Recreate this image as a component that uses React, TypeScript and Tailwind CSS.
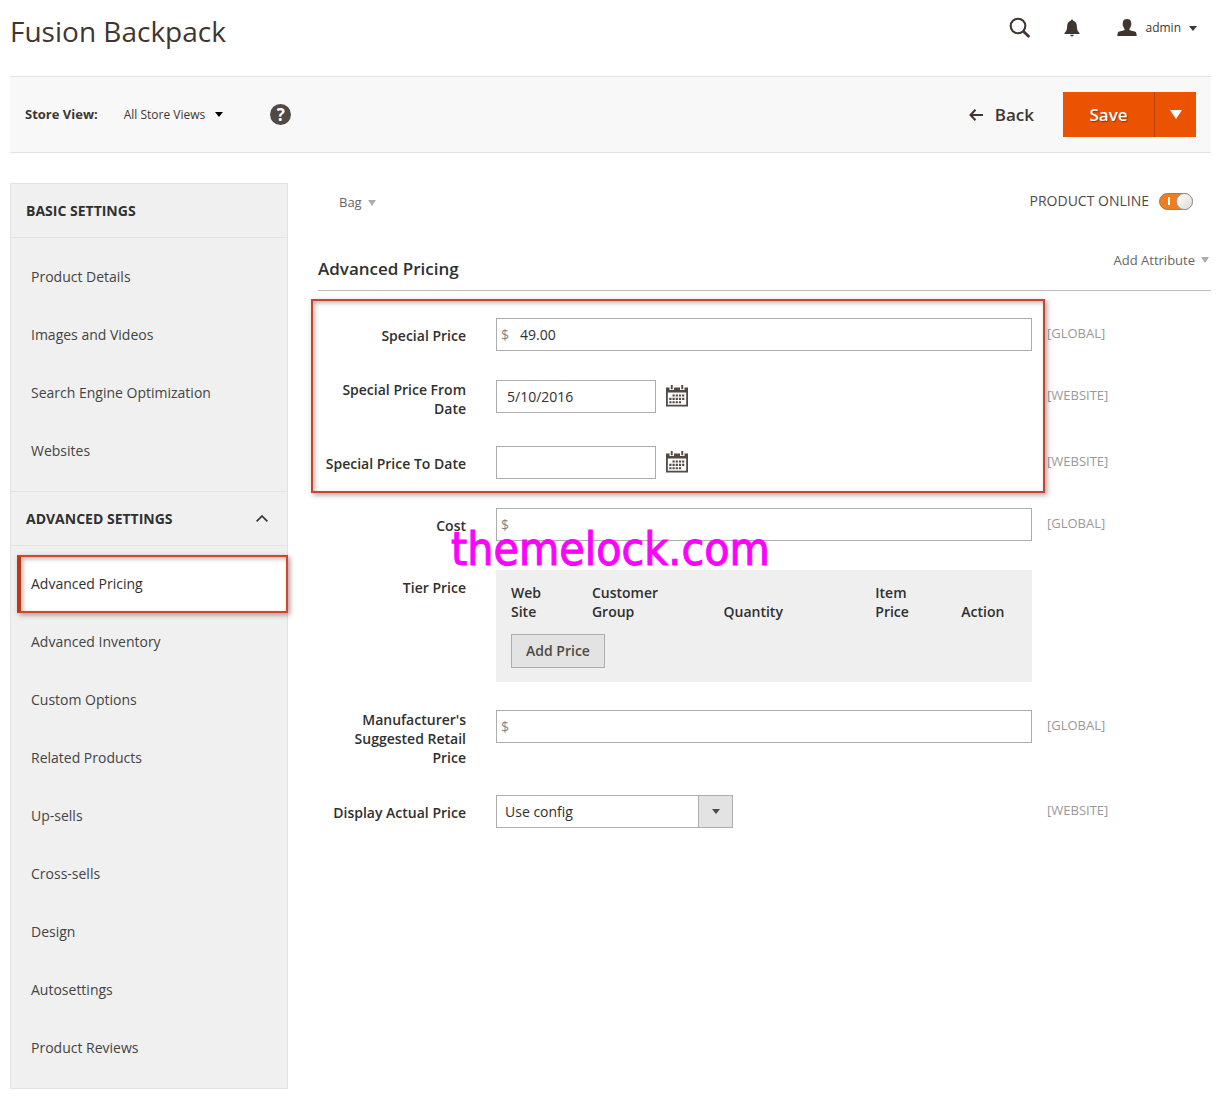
import { useState, type ReactNode } from "react";

const basicItems = ["Product Details", "Images and Videos", "Search Engine Optimization", "Websites"];
const advancedItems = [
  "Advanced Pricing",
  "Advanced Inventory",
  "Custom Options",
  "Related Products",
  "Up-sells",
  "Cross-sells",
  "Design",
  "Autosettings",
  "Product Reviews",
];

function Caret({ className }: { className: string }) {
  return (
    <svg viewBox="0 0 10 6" preserveAspectRatio="none" className={className} fill="currentColor" aria-hidden="true">
      <path d="M0 0h10L5 6z" />
    </svg>
  );
}

function SearchIcon() {
  return (
    <svg viewBox="0 0 22 22" className="h-[22px] w-[22px]" fill="none" stroke="currentColor" aria-hidden="true">
      <circle cx="9" cy="9" r="7.3" strokeWidth="2.1" />
      <path d="M14.3 14.3l6 5.6" strokeWidth="2.8" />
    </svg>
  );
}

function BellIcon() {
  return (
    <svg viewBox="0 0 16 18" className="h-[18px] w-4" fill="currentColor" aria-hidden="true">
      <path d="M8 .5c.8 0 1.2.6 1.2 1.3 2.3.6 3.5 2.4 3.6 4.9.1 3.4.6 5.3 2.7 7.2v1H.5v-1c2.1-1.900 2.600-3.800 2.700-7.200.1-2.500 1.300-4.300 3.600-4.900 0-.7.4-1.300 1.200-1.300z" />
      <path d="M6.300 15.800h3.400c0 1-.7 1.600-1.700 1.600s-1.700-.6-1.700-1.600z" />
    </svg>
  );
}

function UserIcon() {
  return (
    <svg viewBox="0 0 20 18" className="h-[18px] w-5" fill="currentColor" aria-hidden="true">
      <path d="M10 0c2.700 0 4.200 1.500 4.200 4 0 .5 0 .8-.1 1.200.5.200.3 1.500-.3 2-.3 1.200-.7 1.900-1.300 2.600v1.200c1 .8 5.400 1 6.300 2 .6.700.8 2.500.9 4H.3c.1-1.500.3-3.300.9-4 .9-1 5.300-1.200 6.300-2V9.800C6.900 9.100 6.500 8.400 6.200 7.200c-.6-.5-.8-1.800-.3-2-.1-.4-.1-.7-.1-1.200 0-2.500 1.500-4 4.200-4z" />
    </svg>
  );
}

function CalendarIcon() {
  return (
    <svg viewBox="0 0 22 22" className="h-[22px] w-[22px]" fill="#514943" aria-hidden="true">
      <path d="M0 2.500h3.500V5h4.500V2.500h6V5h4.500V2.500H22V21.500H0zM1.800 7.500v12.200h18.400V7.500z" fillRule="evenodd" />
      <path d="M4.800 0h1.900v4.200H4.800zM15.300 0h1.900v4.200h-1.900z" />
      <path d="M6.500 9.500h2.200v2H6.500zM9.700 9.500h2.200v2H9.700zM12.900 9.500h2.200v2h-2.200zM16.100 9.500h2.200v2h-2.200zM3.300 12.800h2.200v2.200H3.300zM6.500 12.800h2.200v2.200H6.500zM9.700 12.800h2.200v2.200H9.700zM12.900 12.800h2.200v2.200h-2.200zM16.100 12.800h2.200v2.200h-2.200zM3.300 16.300h2.200v2H3.300zM6.500 16.300h2.200v2H6.500zM9.700 16.300h2.200v2H9.700zM12.900 16.300h2.200v2h-2.200z" />
    </svg>
  );
}

function Row({ id, label, scope, tall, children }: { id: string; label: string; scope?: string; tall?: boolean; children: ReactNode }) {
  return (
    <div className="grid min-h-[34px] grid-cols-[148px_minmax(0,1fr)_179px]">
      <label htmlFor={id} className={`text-right text-sm leading-[19px] font-semibold text-[#303030] ${tall ? "" : "pt-2"}`}>
        {label}
      </label>
      <div className="ml-[30px]">{children}</div>
      <span className="pt-[7px] pl-[15px] text-[13px] leading-4 text-[#999]">{scope}</span>
    </div>
  );
}

function PriceInput({ id, value }: { id: string; value?: string }) {
  return (
    <div className="flex h-[33px] items-center border border-[#adadad] bg-white text-sm">
      <span className="w-[23px] pl-1 text-sm text-[#858585]">$</span>
      <input id={id} defaultValue={value} className="h-full min-w-0 flex-1 text-[#303030] outline-none" />
    </div>
  );
}

function DateInput({ id, value, label }: { id: string; value?: string; label: string }) {
  return (
    <div className="flex">
      <input id={id} defaultValue={value} className="h-[33px] w-40 border border-[#adadad] bg-white px-2.5 text-sm text-[#303030] outline-none" />
      <button type="button" aria-label={label} className="mt-[5px] ml-2.5 h-[22px]">
        <CalendarIcon />
      </button>
    </div>
  );
}

function NavItem({ name, active }: { name: string; active?: boolean }) {
  return (
    <li className="h-[58px]">
      <a
        href="#"
        className={
          active
            ? "relative -mr-px ml-1.5 flex h-full items-center border-2 border-l-4 border-[#d0482a] border-l-[#b83a18] bg-white pl-2.5 text-[#303030] shadow-[2px_2px_5px_rgba(90,40,30,0.45),inset_2px_2px_4px_rgba(90,40,30,0.35)]"
            : "flex h-full items-center pl-5 text-[#444]"
        }
      >
        {name}
      </a>
    </li>
  );
}

export default function App() {
  const [online, setOnline] = useState(true);
  return (
    <div className="bg-white pr-4 pl-2.5 font-['Open_Sans',sans-serif] text-[#41362f]">
      <header className="flex h-[76px] justify-between">
        <h1 className="pt-[11px] text-[28px] leading-10">Fusion Backpack</h1>
        <div className="flex h-14 items-center pr-3.5">
          <button type="button" aria-label="Search">
            <SearchIcon />
          </button>
          <button type="button" aria-label="Notifications" className="ml-[33px]">
            <BellIcon />
          </button>
          <button type="button" className="ml-[37px] flex items-center text-xs">
            <UserIcon />
            <span className="ml-2">admin</span>
            <Caret className="ml-2 h-[5px] w-2" />
          </button>
        </div>
      </header>

      <div className="flex h-[77px] items-center border-y border-[#e3e3e3] bg-[#f8f8f8] pr-[15px] pl-[15px]">
        <span className="text-[13px] font-bold">Store View:</span>
        <button type="button" className="ml-[26px] flex items-center text-xs">
          All Store Views
          <Caret className="ml-2.5 h-[5px] w-2 text-black" />
        </button>
        <button type="button" aria-label="Help" className="ml-[47px] flex h-[21px] w-[21px] items-center justify-center rounded-full bg-[#514943] text-[17px] leading-none font-bold text-white">
          ?
        </button>
        <button type="button" className="mr-[29px] ml-auto flex items-center text-[17px] font-semibold">
          <svg viewBox="0 0 14 12" className="mr-3 h-3 w-3.5" fill="none" stroke="currentColor" strokeWidth="2" aria-hidden="true">
            <path d="M14 6H1.500M6.500 .8L1.500 6l5 5.200" />
          </svg>
          Back
        </button>
        <div className="flex h-[45px] bg-[#eb5202] text-white">
          <button type="button" className="w-[92px] border-r border-[#b84002] text-[17px] font-semibold [text-shadow:1px_1px_1px_rgba(0,0,0,0.4)]">
            Save
          </button>
          <button type="button" aria-label="More save options" className="flex w-[41px] items-center justify-center">
            <Caret className="h-[9px] w-3" />
          </button>
        </div>
      </div>

      <div className="flex pt-[30px] pb-2">
        <nav className="w-[278px] shrink-0 border border-[#e3e3e3] bg-[#f0f0f0] text-sm">
          <h2 className="flex h-[54px] items-center border-b border-[#e3e3e3] pl-[15px] font-bold text-[#303030]">BASIC SETTINGS</h2>
          <ul className="pt-2.5 pb-[11px]">
            {basicItems.map((n) => (
              <NavItem key={n} name={n} />
            ))}
          </ul>
          <h2 className="border-y border-[#e3e3e3] font-bold text-[#303030]">
            <button type="button" className="flex h-[53px] w-full items-center justify-between pr-[19px] pl-[15px]">
              ADVANCED SETTINGS
              <svg viewBox="0 0 12 7" className="h-[7px] w-3" fill="none" stroke="currentColor" strokeWidth="1.6" aria-hidden="true">
                <path d="M.6 6.400L6 1l5.400 5.400" />
              </svg>
            </button>
          </h2>
          <ul className="pt-[9px] pb-[11px]">
            {advancedItems.map((n) => (
              <NavItem key={n} name={n} active={n === "Advanced Pricing"} />
            ))}
          </ul>
        </nav>

        <main className="ml-[30px] min-w-0 flex-1">
          <div className="flex h-9 items-center justify-between pr-[18px] pl-[21px]">
            <button type="button" className="flex items-center pt-1 text-[13px] text-[#666]">
              Bag
              <Caret className="ml-1.5 h-1.5 w-2 text-[#adadad]" />
            </button>
            <label className="flex items-center text-sm text-[#514943]">
              PRODUCT ONLINE
              <input type="checkbox" role="switch" className="peer sr-only" checked={online} onChange={() => setOnline(!online)} />
              <span className="ml-2.5 flex h-[17px] w-[34px] flex-row-reverse items-center rounded-full border border-[#a87a55] bg-[#ef7d22]">
                <span className="-mr-px h-[17px] w-[17px] rounded-full border border-[#a39b95] bg-linear-to-br from-white to-[#dedbd8]" />
                <span className="mr-1.5 h-2 w-0.5 bg-white" />
              </span>
            </label>
          </div>

          <div className="flex h-[72px] items-end justify-between border-b border-[#bdbdbd] pb-2">
            <h2 className="text-[17px] leading-[26px] font-semibold text-[#303030]">Advanced Pricing</h2>
            <button type="button" className="flex items-center pr-0.5 pb-3 text-[13px] text-[#666]">
              Add Attribute
              <Caret className="ml-1.5 h-1.5 w-2 text-[#adadad]" />
            </button>
          </div>

          <form className="flex flex-col gap-7 pt-[27px]">
            <div className="relative flex flex-col gap-7">
              <div className="pointer-events-none absolute -top-[19px] right-[166px] -bottom-[13px] -left-[7px] border-2 border-[#c0482e] shadow-[2px_2px_5px_rgba(90,40,30,0.45),inset_2px_2px_4px_rgba(90,40,30,0.35)]" />
              <Row id="special" label="Special Price" scope="[GLOBAL]">
                <PriceInput id="special" value="49.00" />
              </Row>
              <Row id="from" label="Special Price From Date" scope="[WEBSITE]" tall>
                <DateInput id="from" value="5/10/2016" label="Choose start date" />
              </Row>
              <Row id="to" label="Special Price To Date" scope="[WEBSITE]">
                <DateInput id="to" label="Choose end date" />
              </Row>
            </div>
            <div className="relative">
              <Row id="cost" label="Cost" scope="[GLOBAL]">
                <PriceInput id="cost" />
              </Row>
              <div className="pointer-events-none absolute top-3 left-[133px] font-['DejaVu_Sans_Condensed','DejaVu_Sans',sans-serif] text-[46px] leading-[58px] text-[#f0f] [-webkit-text-stroke:1px_#f0f]">
                themelock.com
              </div>
            </div>
            <Row id="tier" label="Tier Price">
              <div className="bg-[#efefef] px-[15px] pt-[13px] pb-3.5">
                <table className="w-full text-left text-sm leading-[19px] text-[#303030]">
                  <thead>
                    <tr className="align-bottom">
                      <th className="w-[16%] pr-8 font-semibold">Web Site</th>
                      <th className="w-[26%] pr-12 font-semibold">Customer Group</th>
                      <th className="w-[30%] font-semibold">Quantity</th>
                      <th className="w-[17%] pr-10 font-semibold">Item Price</th>
                      <th className="font-semibold">Action</th>
                    </tr>
                  </thead>
                </table>
                <button id="tier" type="button" className="mt-[13px] h-[34px] border border-[#adadad] bg-[#e3e3e3] px-3.5 text-sm font-semibold text-[#514943]">
                  Add Price
                </button>
              </div>
            </Row>
            <Row id="msrp" label="Manufacturer's Suggested Retail Price" scope="[GLOBAL]" tall>
              <PriceInput id="msrp" />
            </Row>
            <Row id="display" label="Display Actual Price" scope="[WEBSITE]">
              <div className="relative w-[237px]">
                <select id="display" className="h-[33px] w-full appearance-none border border-[#adadad] bg-white pl-2 text-sm text-[#303030] outline-none">
                  <option>Use config</option>
                  <option>On Gesture</option>
                  <option>In Cart</option>
                  <option>Before Order Confirmation</option>
                </select>
                <span className="pointer-events-none absolute top-0 right-0 flex h-[33px] w-[35px] items-center justify-center border border-[#adadad] bg-[#e3e3e3]">
                  <Caret className="h-[5px] w-2 text-[#514943]" />
                </span>
              </div>
            </Row>
          </form>
        </main>
      </div>
    </div>
  );
}
